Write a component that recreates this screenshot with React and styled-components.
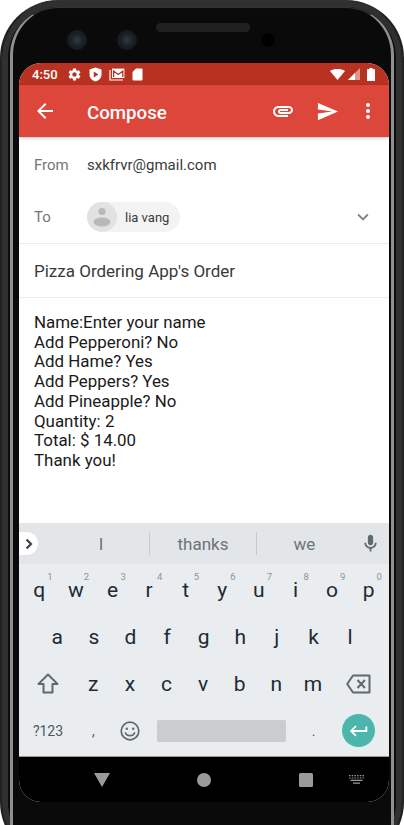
import React from "react";
import styled, { createGlobalStyle } from "styled-components";

const GlobalStyle = createGlobalStyle`
  html, body {
    margin: 0;
    padding: 0;
    background: #fff;
    font-family: Roboto, "Liberation Sans", sans-serif;
  }
`;

const Page = styled.div`
  width: 404px;
  height: 825px;
  overflow: hidden;
`;

const Phone = styled.div`
  box-sizing: border-box;
  position: relative;
  width: 404px;
  height: 860px;
  padding: 0 15px;
  border-radius: 58px;
  background: #0a0a0a;
  border-left: 2px solid #222;
  border-right: 2px solid #222;
  border-top: 1px solid #333;
  box-shadow: inset 0 0 0 6px #303030, inset 0 0 0 8px #0c0c0c;

  &::before {
    content: "";
    position: absolute;
    top: 6px;
    left: 8px;
    right: 8px;
    height: 900px;
    border-radius: 48px;
    border-left: 3px solid #8f8f8f;
    border-right: 3px solid #8f8f8f;
    border-top: 1.5px solid #333;
  }
`;

const TopBezel = styled.div`
  height: 62px;
  display: flex;
  align-items: flex-start;
  position: relative;
`;

const Camera = styled.div`
  position: absolute;
  top: 29px;
  left: ${(p) => p.$x}px;
  width: 20px;
  height: 20px;
  border-radius: 50%;
  background: radial-gradient(circle, #333a42 0%, #1a2026 45%, #0f1317 100%);
`;

const Speaker = styled.div`
  position: absolute;
  top: 22px;
  left: 139px;
  width: 94px;
  height: 9px;
  border-radius: 5px;
  background: #202020;
`;

const FrontDot = styled.div`
  position: absolute;
  top: 32px;
  left: 244px;
  width: 14px;
  height: 14px;
  border-radius: 50%;
  background: #000;
`;

const Screen = styled.div`
  position: relative;
  width: 370px;
  height: 739px;
  margin-left: 2px;
  border-radius: 22px;
  overflow: hidden;
  display: flex;
  flex-direction: column;
  background: #fff;
`;

const StatusBar = styled.div`
  height: 22px;
  flex: none;
  display: flex;
  align-items: center;
  padding: 0 14px 0 13px;
  background: #b93221;
  color: #fff;
  font-size: 13px;
  font-weight: 500;
`;

const StatusIcons = styled.div`
  display: flex;
  align-items: center;
  gap: 7px;
  margin-left: 9px;
`;

const SystemIcons = styled.div`
  display: flex;
  align-items: center;
  gap: 3px;
`;

const Grow = styled.div`
  flex: 1;
`;

const AppBar = styled.div`
  height: 52px;
  flex: none;
  display: flex;
  align-items: center;
  background: #dd463a;
  color: #fff;
  padding: 0 4px 0 14px;
  box-shadow: 0 1px 3px rgba(0, 0, 0, 0.25);
  position: relative;
`;

const Title = styled.div`
  font-size: 18.7px;
  font-weight: 500;
  margin-left: 30px;
  padding-top: 3px;
  flex: 1;
`;

const ActionSlot = styled.div`
  width: ${(p) => p.$w}px;
  display: flex;
  justify-content: center;
  align-items: center;
`;

const Content = styled.div`
  flex: 1;
  display: flex;
  flex-direction: column;
  min-height: 0;
`;

const FromRow = styled.div`
  height: 57px;
  display: flex;
  align-items: center;
  padding: 0 15px 2px;
  font-size: 15px;
  box-sizing: border-box;
`;

const FieldLabel = styled.div`
  width: 53px;
  color: #757575;
  font-size: 15px;
`;

const FieldValue = styled.div`
  color: #3a3a3a;
`;

const ToRow = styled.div`
  height: 50px;
  display: flex;
  align-items: center;
  padding: 0 15px 3px;
  border-bottom: 1px solid #ececec;
  box-sizing: border-box;
`;

const Chip = styled.div`
  display: flex;
  align-items: center;
  height: 30px;
  padding-right: 11px;
  border-radius: 15px;
  background: #f3f3f3;
  font-size: 13px;
  color: #3a3a3a;
  gap: 8px;
`;

const Avatar = styled.div`
  width: 30px;
  height: 30px;
  border-radius: 50%;
  background: #e2e2e2;
  display: flex;
  align-items: center;
  justify-content: center;
`;

const SubjectRow = styled.div`
  height: 54px;
  display: flex;
  align-items: center;
  padding: 0 15px;
  font-size: 17px;
  color: #3a3a3a;
  border-bottom: 1px solid #ececec;
  box-sizing: border-box;
`;

const Body = styled.div`
  flex: 1;
  padding: 15px 15px 0;
  font-size: 16.9px;
  line-height: 19.7px;
  color: #1a1a1a;
`;

const BodyLine = styled.div``;

const Suggestions = styled.div`
  height: 41px;
  flex: none;
  display: flex;
  align-items: center;
  padding-left: 34px;
  box-sizing: border-box;
  background: #e2e6e9;
  position: relative;
  font-size: 17px;
  color: #6b7479;
`;

const ExpandTab = styled.div`
  position: absolute;
  left: 0;
  top: 9px;
  width: 19px;
  height: 23px;
  border-radius: 0 12px 12px 0;
  background: #fff;
  display: flex;
  align-items: center;
  justify-content: center;
`;

const Suggestion = styled.div`
  width: ${(p) => p.$w}px;
  height: 23px;
  padding-top: 1px;
  display: flex;
  align-items: center;
  justify-content: center;
  border-left: ${(p) => (p.$divider ? "1px solid #c5cacd" : "none")};
  box-sizing: border-box;
`;

const MicSlot = styled.div`
  flex: 1;
  display: flex;
  justify-content: center;
`;

const Keyboard = styled.div`
  height: 193px;
  flex: none;
  box-sizing: border-box;
  display: flex;
  flex-direction: column;
  padding-top: 2px;
  background: #eaedf0;
  border-bottom: 1px solid #9a9a9a;
`;

const KeyRow = styled.div`
  height: 47px;
  display: flex;
  align-items: center;
  padding-left: ${(p) => p.$pad || 0}px;
`;

const Key = styled.div`
  width: ${(p) => p.$w || 36.6}px;
  height: 100%;
  flex: none;
  position: relative;
  display: flex;
  align-items: center;
  justify-content: center;
  font-size: 21px;
  color: #1c2b33;
`;

const Hint = styled.span`
  position: absolute;
  top: 5px;
  right: 5px;
  font-size: 9.5px;
  color: #8b9398;
`;

const SymbolKey = styled(Key)`
  font-size: 14px;
  color: #4f5a60;
`;

const SpaceBar = styled.div`
  width: 129px;
  height: 22px;
  margin: 0 9px;
  flex: none;
  border-radius: 2px;
  background: #c9cdd0;
`;

const EnterButton = styled.div`
  width: 33px;
  height: 33px;
  border-radius: 50%;
  background: #4db6ac;
  display: flex;
  align-items: center;
  justify-content: center;
`;

const NavBar = styled.div`
  height: 45px;
  flex: none;
  display: flex;
  align-items: center;
  background: #000;
  position: relative;
`;

const NavSlot = styled.div`
  width: ${(p) => p.$w}px;
  display: flex;
  justify-content: center;
  flex: none;
`;

const Icon = ({ d, size = 24, color = "#fff", box = 24 }) => (
  <svg width={size} height={size} viewBox={`0 0 ${box} ${box}`} fill={color}>
    <path d={d} />
  </svg>
);

const paths = {
  gear: "M19.14 12.94c.04-.3.06-.61.06-.94 0-.32-.02-.64-.07-.94l2.03-1.58c.18-.14.23-.41.12-.61l-1.92-3.32c-.12-.22-.37-.29-.59-.22l-2.39.96c-.5-.38-1.03-.7-1.62-.94l-.36-2.54c-.04-.24-.24-.41-.48-.41h-3.84c-.24 0-.43.17-.47.41l-.36 2.54c-.59.24-1.13.57-1.62.94l-2.39-.96c-.22-.08-.47 0-.59.22L2.74 8.87c-.12.21-.08.47.12.61l2.03 1.58c-.05.3-.09.63-.09.94s.02.64.07.94l-2.03 1.58c-.18.14-.23.41-.12.61l1.92 3.32c.12.22.37.29.59.22l2.39-.96c.5.38 1.03.7 1.62.94l.36 2.54c.05.24.24.41.48.41h3.84c.24 0 .44-.17.47-.41l.36-2.54c.59-.24 1.13-.56 1.62-.94l2.39.96c.22.08.47 0 .59-.22l1.92-3.32c.12-.22.07-.47-.12-.61l-2.01-1.58zM12 15.6c-1.98 0-3.6-1.62-3.6-3.6s1.62-3.6 3.6-3.6 3.6 1.62 3.6 3.6-1.62 3.6-3.6 3.6z",
  back: "M20 11H7.83l5.59-5.59L12 4l-8 8 8 8 1.41-1.41L7.83 13H20v-2z",
  attach: "M2 12.5C2 9.46 4.46 7 7.5 7H18c2.21 0 4 1.79 4 4s-1.79 4-4 4H9.5C8.12 15 7 13.88 7 12.5S8.12 10 9.5 10H17v2H9.41c-.55 0-.55 1 0 1H18c1.1 0 2-.9 2-2s-.9-2-2-2H7.5C5.57 9 4 10.57 4 12.5S5.57 16 7.5 16H17v2H7.5C4.46 18 2 15.54 2 12.5z",
  send: "M2.01 21L23 12 2.01 3 2 10l15 2-15 2z",
  chevron: "M16.59 8.59L12 13.17 7.41 8.59 6 10l6 6 6-6z",
  mic: "M12 14c1.66 0 3-1.34 3-3V5c0-1.66-1.34-3-3-3S9 3.34 9 5v6c0 1.66 1.34 3 3 3zM17 11c0 2.76-2.24 5-5 5s-5-2.24-5-5H5c0 3.53 2.61 6.43 6 6.92V21h2v-3.08c3.39-.49 6-3.39 6-6.92h-2z",
  enter: "M19 7v4H5.83l3.58-3.59L8 6l-6 6 6 6 1.41-1.41L5.83 13H21V7z",
};

const Shield = () => (
  <svg width="13" height="15" viewBox="0 0 13 15">
    <path d="M6.5 0.5 L12.5 2.5 V7.5 C12.5 11 10 13.5 6.5 14.5 C3 13.5 0.5 11 0.5 7.5 V2.5 Z" fill="#fff" />
    <path d="M4.8 4.5 L9.5 7.5 L4.8 10.5 Z" fill="#b93221" />
  </svg>
);

const MailStack = () => (
  <svg width="16" height="13" viewBox="0 0 16 13" fill="none" stroke="#fff">
    <path d="M1 2 V12 H14" strokeWidth="1.2" />
    <rect x="3" y="0.6" width="12.4" height="9.4" fill="#fff" stroke="none" />
    <path d="M4.6 9 V3 L9.2 6.4 L13.8 3 V9" stroke="#b93221" strokeWidth="1.3" />
  </svg>
);

const SdCard = () => (
  <svg width="11" height="13" viewBox="0 0 11 13">
    <path d="M4 0.5 H9.5 A1 1 0 0 1 10.5 1.5 V11.5 A1 1 0 0 1 9.5 12.5 H1.5 A1 1 0 0 1 0.5 11.5 V4 Z" fill="#fff" />
  </svg>
);

const WifiIcon = () => (
  <svg width="15" height="11" viewBox="0 0 15 11">
    <path d="M0 2 C4 -0.6 11 -0.6 15 2 L7.5 11 Z" fill="#fff" />
  </svg>
);

const SignalIcon = () => (
  <svg width="16" height="12" viewBox="0 0 16 12">
    <path d="M12 0 V12 H0 Z" fill="#e0968c" />
    <path d="M7 5 V12 H0 Z" fill="#fff" />
  </svg>
);

const BatteryIcon = () => (
  <svg width="8" height="13" viewBox="0 0 8 13">
    <path d="M2.4 0 H5.6 V1.2 H8 V13 H0 V1.2 H2.4 Z" fill="#fff" />
  </svg>
);

const MoreIcon = () => (
  <svg width="6" height="18" viewBox="0 0 6 18" fill="#fff">
    <circle cx="3" cy="3" r="2" />
    <circle cx="3" cy="9" r="2" />
    <circle cx="3" cy="15" r="2" />
  </svg>
);

const PersonIcon = () => (
  <svg width="20" height="24" viewBox="0 0 20 24" fill="#b9b9b9">
    <circle cx="10" cy="6.5" r="3.6" />
    <ellipse cx="10" cy="17" rx="8.5" ry="4.6" />
  </svg>
);

const ShiftIcon = () => (
  <svg width="22" height="21" viewBox="0 0 22 21" fill="none" stroke="#5f6a70" strokeWidth="2" strokeLinejoin="round">
    <path d="M11 1.5 L20.5 11 H15.5 V19.5 H6.5 V11 H1.5 Z" />
  </svg>
);

const BackspaceIcon = () => (
  <svg width="25" height="20" viewBox="0 0 25 20" fill="none" stroke="#5f6a70" strokeWidth="2" strokeLinejoin="round">
    <path d="M7 1.5 H23.5 V18.5 H7 L1.2 10 Z" />
    <path d="M11.5 6 L19 14 M19 6 L11.5 14" />
  </svg>
);

const EmojiIcon = () => (
  <svg width="20" height="20" viewBox="0 0 20 20" fill="none" stroke="#5f6a70" strokeWidth="1.7">
    <circle cx="10" cy="10" r="8.8" />
    <circle cx="6.8" cy="7.8" r="1.2" fill="#5f6a70" stroke="none" />
    <circle cx="13.2" cy="7.8" r="1.2" fill="#5f6a70" stroke="none" />
    <path d="M5.5 12 C7 15.6 13 15.6 14.5 12" strokeLinecap="round" />
  </svg>
);

const ExpandArrow = () => (
  <svg width="8" height="12" viewBox="0 0 8 12" fill="none" stroke="#3c4449" strokeWidth="2.2">
    <path d="M1.5 1.5 L6 6 L1.5 10.5" />
  </svg>
);

const NavBack = () => (
  <svg width="16" height="14" viewBox="0 0 16 14">
    <path d="M0 0 H16 L8 14 Z" fill="#9a9a9a" />
  </svg>
);

const NavHome = () => (
  <svg width="14" height="14" viewBox="0 0 14 14">
    <circle cx="7" cy="7" r="7" fill="#9a9a9a" />
  </svg>
);

const NavRecents = () => (
  <svg width="14" height="14" viewBox="0 0 14 14">
    <rect width="14" height="14" rx="1.5" fill="#9a9a9a" />
  </svg>
);

const NavKeyboard = () => (
  <svg width="15" height="9" viewBox="0 0 15 9" fill="#9a9a9a">
    <path d="M0 0h1.5v1.2H0zM2.7 0h1.5v1.2H2.7zM5.4 0h1.5v1.2H5.4zM8.1 0h1.5v1.2H8.1zM10.8 0h1.5v1.2h-1.5zM13.5 0H15v1.2h-1.5z" />
    <path d="M0 2.4h1.5v1.2H0zM2.7 2.4h1.5v1.2H2.7zM5.4 2.4h1.5v1.2H5.4zM8.1 2.4h1.5v1.2H8.1zM10.8 2.4h1.5v1.2h-1.5zM13.5 2.4H15v1.2h-1.5z" />
    <path d="M1.5 4.8h12V6h-12z" />
    <path d="M4 7.6h7v1.2H4z" />
  </svg>
);

const bodyLines = [
  "Name:Enter your name",
  "Add Pepperoni? No",
  "Add Hame? Yes",
  "Add Peppers? Yes",
  "Add Pineapple? No",
  "Quantity: 2",
  "Total: $ 14.00",
  "Thank you!",
];

const topRow = ["q", "w", "e", "r", "t", "y", "u", "i", "o", "p"];
const middleRow = ["a", "s", "d", "f", "g", "h", "j", "k", "l"];
const bottomRow = ["z", "x", "c", "v", "b", "n", "m"];

const App = () => (
  <Page>
    <GlobalStyle />
    <Phone>
      <TopBezel>
        <Camera $x={50} />
        <Camera $x={100} />
        <Speaker />
        <FrontDot />
      </TopBezel>
      <Screen>
        <StatusBar>
          4:50
          <StatusIcons>
            <Icon d={paths.gear} size={15} />
            <Shield />
            <MailStack />
            <SdCard />
          </StatusIcons>
          <Grow />
          <SystemIcons>
            <WifiIcon />
            <SignalIcon />
            <BatteryIcon />
          </SystemIcons>
        </StatusBar>
        <AppBar>
          <Icon d={paths.back} size={24} />
          <Title>Compose</Title>
          <ActionSlot $w={45}>
            <Icon d={paths.attach} size={24} />
          </ActionSlot>
          <ActionSlot $w={45}>
            <Icon d={paths.send} size={23} />
          </ActionSlot>
          <ActionSlot $w={35}>
            <MoreIcon />
          </ActionSlot>
        </AppBar>
        <Content>
          <FromRow>
            <FieldLabel>From</FieldLabel>
            <FieldValue>sxkfrvr@gmail.com</FieldValue>
          </FromRow>
          <ToRow>
            <FieldLabel>To</FieldLabel>
            <Chip>
              <Avatar>
                <PersonIcon />
              </Avatar>
              lia vang
            </Chip>
            <Grow />
            <Icon d={paths.chevron} size={22} color="#858585" />
          </ToRow>
          <SubjectRow>Pizza Ordering App's Order</SubjectRow>
          <Body>
            {bodyLines.map((line) => (
              <BodyLine key={line}>{line}</BodyLine>
            ))}
          </Body>
        </Content>
        <Suggestions>
          <ExpandTab>
            <ExpandArrow />
          </ExpandTab>
          <Suggestion $w={96}>I</Suggestion>
          <Suggestion $w={107} $divider>thanks</Suggestion>
          <Suggestion $w={96} $divider>we</Suggestion>
          <MicSlot>
            <Icon d={paths.mic} size={21} color="#5f6a70" />
          </MicSlot>
        </Suggestions>
        <Keyboard>
          <KeyRow $pad={2}>
            {topRow.map((k, i) => (
              <Key key={k}>
                {k}
                <Hint>{(i + 1) % 10}</Hint>
              </Key>
            ))}
          </KeyRow>
          <KeyRow $pad={20}>
            {middleRow.map((k) => (
              <Key key={k}>{k}</Key>
            ))}
          </KeyRow>
          <KeyRow $pad={2}>
            <Key $w={54}>
              <ShiftIcon />
            </Key>
            {bottomRow.map((k) => (
              <Key key={k}>{k}</Key>
            ))}
            <Key $w={54}>
              <BackspaceIcon />
            </Key>
          </KeyRow>
          <KeyRow $pad={2}>
            <SymbolKey $w={54}>?123</SymbolKey>
            <SymbolKey>,</SymbolKey>
            <Key>
              <EmojiIcon />
            </Key>
            <SpaceBar />
            <SymbolKey>.</SymbolKey>
            <Key $w={54}>
              <EnterButton>
                <Icon d={paths.enter} size={22} />
              </EnterButton>
            </Key>
          </KeyRow>
        </Keyboard>
        <NavBar>
          <NavSlot $w={166}>
            <NavBack />
          </NavSlot>
          <NavSlot $w={38}>
            <NavHome />
          </NavSlot>
          <NavSlot $w={60} />
          <NavSlot $w={46}>
            <NavRecents />
          </NavSlot>
          <NavSlot $w={54}>
            <NavKeyboard />
          </NavSlot>
        </NavBar>
      </Screen>
    </Phone>
  </Page>
);

export default App;
